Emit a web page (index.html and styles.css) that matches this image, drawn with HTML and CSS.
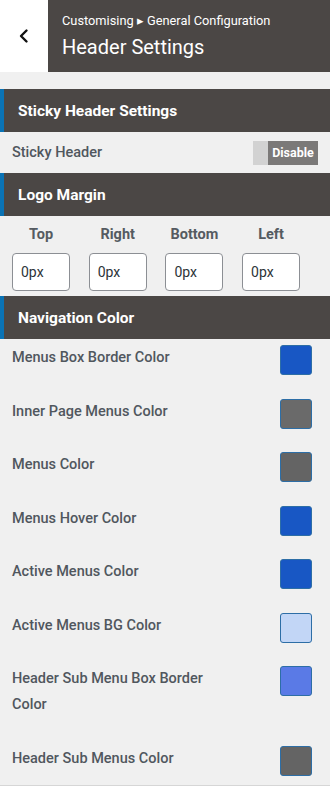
FILE: index.html
```html
<!DOCTYPE html>
<html>
<head>
<meta charset="utf-8">
<link rel="stylesheet" href="styles.css">
</head>
<body>
<header class="topbar">
  <div class="back">
    <svg width="12" height="16" viewBox="0 0 12 16"><path d="M8.5 2.5 L3 8 L8.5 13.5" fill="none" stroke="#111" stroke-width="2.4" stroke-linecap="round" stroke-linejoin="round"/></svg>
  </div>
  <div class="titles">
    <div class="crumb">Customising ▸ General Configuration</div>
    <div class="title">Header Settings</div>
  </div>
</header>

<div class="panel">
  <h2 class="section">Sticky Header Settings</h2>
  <div class="sticky-row">
    <span class="label">Sticky Header</span>
    <span class="toggle"><span class="knob"></span><span class="state">Disable</span></span>
  </div>

  <h2 class="section">Logo Margin</h2>
  <div class="margins">
    <div class="mcol"><span class="mlabel">Top</span><input class="minput" value="0px"></div>
    <div class="mcol"><span class="mlabel">Right</span><input class="minput" value="0px"></div>
    <div class="mcol"><span class="mlabel">Bottom</span><input class="minput" value="0px"></div>
    <div class="mcol"><span class="mlabel">Left</span><input class="minput" value="0px"></div>
  </div>

  <h2 class="section">Navigation Color</h2>
  <div class="colors">
    <div class="crow"><span class="clabel">Menus Box Border Color</span><span class="swatch blue"></span></div>
    <div class="crow"><span class="clabel">Inner Page Menus Color</span><span class="swatch gray1"></span></div>
    <div class="crow"><span class="clabel">Menus Color</span><span class="swatch gray2"></span></div>
    <div class="crow"><span class="clabel">Menus Hover Color</span><span class="swatch blue"></span></div>
    <div class="crow"><span class="clabel">Active Menus Color</span><span class="swatch blue"></span></div>
    <div class="crow"><span class="clabel">Active Menus BG Color</span><span class="swatch light"></span></div>
    <div class="crow"><span class="clabel">Header Sub Menu Box Border Color</span><span class="swatch peri"></span></div>
    <div class="crow last"><span class="clabel">Header Sub Menus Color</span><span class="swatch gray2"></span></div>
  </div>
</div>
</body>
</html>
```

FILE: styles.css
```css
* { box-sizing: border-box; }
html, body { margin: 0; padding: 0; }
body {
  width: 330px;
  background: #fff;
  font-family: Roboto, "Liberation Sans", sans-serif;
}
.topbar {
  display: flex;
  height: 72px;
}
.back {
  width: 48px;
  background: #fff;
  display: flex;
  align-items: center;
  justify-content: center;
}
.titles {
  flex: 1;
  background: #4b4745;
  color: #fff;
  padding: 12px 0 0 14px;
}
.crumb {
  font-size: 12.8px;
  line-height: 18px;
}
.title {
  font-size: 20px;
  line-height: 26px;
  margin-top: 4px;
}
.panel {
  background: #f0f0f0;
  padding-top: 17px;
}
.section {
  margin: 0;
  height: 43px;
  display: flex;
  align-items: center;
  background: #4b4745;
  border-left: 4px solid #0a73b5;
  padding-left: 14px;
  color: #fff;
  font-size: 15.5px;
  font-weight: 700;
}
.sticky-row {
  height: 41px;
  display: flex;
  align-items: center;
  justify-content: space-between;
  padding: 0 12px;
}
.label {
  font-size: 14.5px;
  font-weight: 500;
  color: #50575e;
}
.toggle {
  display: flex;
  height: 24px;
  width: 65px;
}
.knob {
  width: 15px;
  background: #d2d2d2;
}
.state {
  flex: 1;
  background: #7b7978;
  color: #fff;
  font-size: 12.5px;
  font-weight: 700;
  display: flex;
  align-items: center;
  justify-content: center;
}
.margins {
  display: grid;
  grid-template-columns: repeat(4, 58px);
  column-gap: 18.7px;
  padding: 10px 0 5px 12px;
}
.mcol {
  display: flex;
  flex-direction: column;
  align-items: center;
}
.mlabel {
  font-size: 14.5px;
  font-weight: 700;
  color: #555b61;
  line-height: 18px;
  margin-bottom: 9px;
}
.minput {
  width: 58px;
  height: 38px;
  border: 1px solid #8c8f94;
  border-radius: 4px;
  background: #fff;
  padding: 0 8px;
  font-family: Roboto, "Liberation Sans", sans-serif;
  font-size: 14px;
  color: #2c3338;
}
.colors {
  padding-top: 6px;
  border-bottom: 1px solid #d6d6d6;
}
.crow {
  display: flex;
  justify-content: space-between;
  align-items: flex-start;
  padding: 0 18px 0 12px;
}
.clabel {
  width: 222px;
  font-size: 14.5px;
  font-weight: 500;
  color: #50575e;
  line-height: 26px;
  padding-bottom: 27.5px;
}
.crow.last .clabel { padding-bottom: 13px; }
.swatch {
  width: 32px;
  height: 30px;
  border: 1px solid #2d6ea6;
  border-radius: 3px;
}
.blue { background: #1857c4; }
.gray1 { background: #6a6a6a; }
.gray2 { background: #646464; }
.light { background: #c2d6f6; }
.peri { background: #5a7ae6; }
```
